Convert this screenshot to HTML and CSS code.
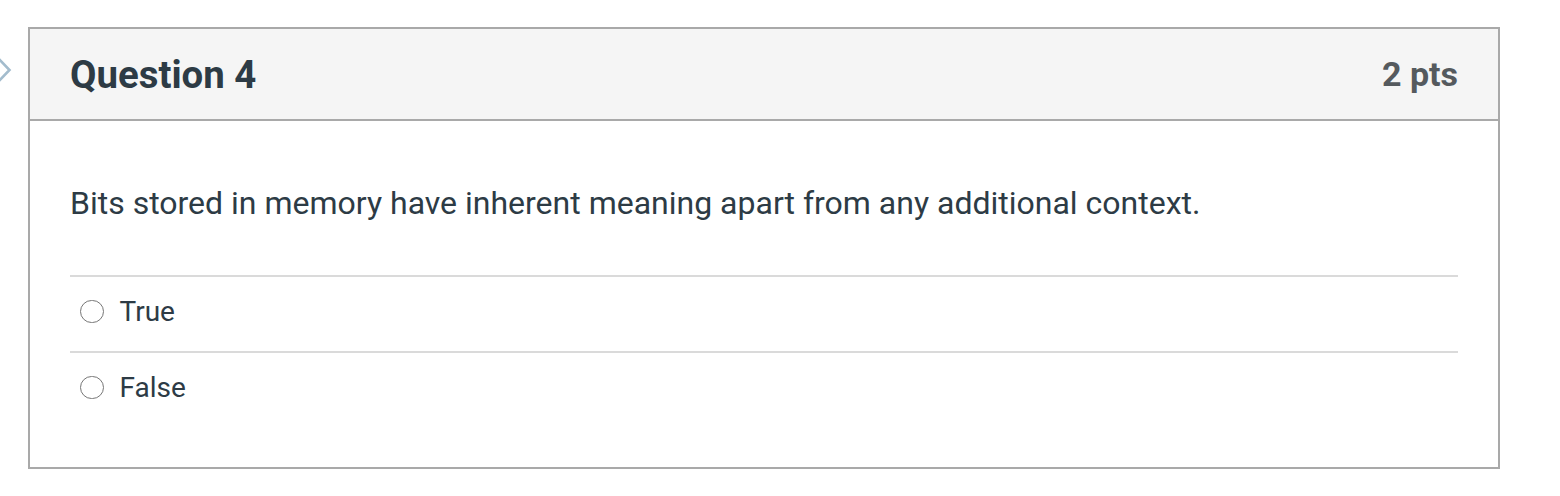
FILE: index.html
```html
<!DOCTYPE html>
<html>
<head>
<meta charset="utf-8">
<link rel="stylesheet" href="styles.css">
</head>
<body>
<div class="page">
  <svg class="nav-chevron" width="14" height="34" viewBox="0 0 14 34"><path d="M-4 2 L9.5 16 L-4 30" fill="none" stroke="#a3bccd" stroke-width="2.6"/></svg>
  <div class="question">
    <div class="q-header">
      <span class="q-title">Question 4</span>
      <span class="q-points">2 pts</span>
    </div>
    <div class="q-body">
      <p class="q-text">Bits stored in memory have inherent meaning apart from any additional context.</p>
      <div class="answers">
        <label class="answer"><span class="radio"></span><span class="answer-label">True</span></label>
        <label class="answer"><span class="radio"></span><span class="answer-label">False</span></label>
      </div>
    </div>
  </div>
</div>
</body>
</html>
```
FILE: styles.css
```css
html, body {
  margin: 0;
  padding: 0;
  background: #ffffff;
}
body {
  font-family: Roboto, "Liberation Sans", sans-serif;
  color: #2d3b45;
}
.page {
  position: relative;
  padding: 27px 0 0 28px;
}
.nav-chevron {
  position: absolute;
  left: 0;
  top: 54px;
}
.question {
  width: 1468px;
  border: 2px solid #a9a9a9;
  background: #fff;
}
.q-header {
  height: 90px;
  background: #f5f5f5;
  border-bottom: 2px solid #a9a9a9;
  display: flex;
  align-items: center;
  justify-content: space-between;
  padding: 0 40px;
}
.q-title {
  font-size: 38.4px;
  font-weight: 700;
  color: #2d3b45;
}
.q-points {
  font-size: 34px;
  font-weight: 700;
  color: #555a5e;
}
.q-body {
  padding: 58px 40px 40px 40px;
}
.q-text {
  margin: 0 0 48px 0;
  font-size: 32px;
  line-height: 48px;
}
.answer {
  display: flex;
  align-items: center;
  box-sizing: border-box;
  height: 76px;
  border-top: 2px solid #dadada;
  padding-left: 10px;
  padding-bottom: 5px;
}
.radio {
  width: 21.5px;
  height: 21.5px;
  border: 1.8px solid #767676;
  border-radius: 50%;
  margin-right: 16px;
  flex: none;
}
.answer-label {
  font-size: 28px;
  color: #2d3b45;
}
```
